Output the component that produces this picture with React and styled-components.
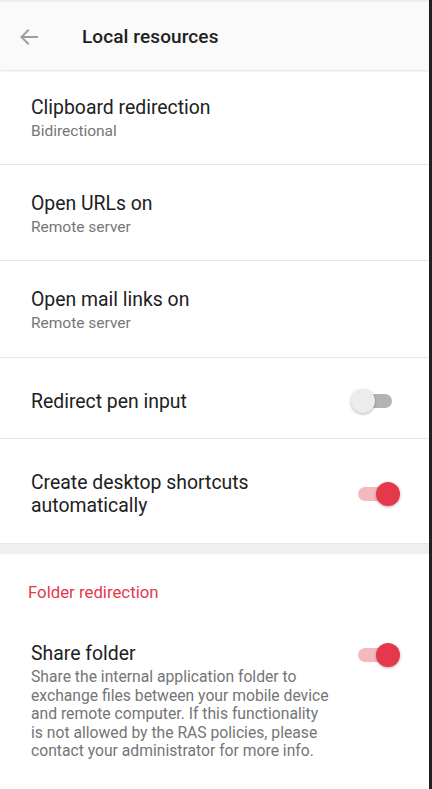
import React, { useState } from "react";
import styled, { createGlobalStyle } from "styled-components";

const GlobalStyle = createGlobalStyle`
  html, body {
    margin: 0;
    padding: 0;
    background: #ffffff;
    font-family: Roboto, "Noto Sans", Arial, sans-serif;
    -webkit-font-smoothing: antialiased;
  }
  * { box-sizing: border-box; }
`;

const RED = "#e5394b";

function Switch({ on, onToggle }) {
  return (
    <SwitchBox onClick={onToggle} role="switch" aria-checked={on}>
      <Track $on={on} />
      <Thumb $on={on} />
    </SwitchBox>
  );
}

function BackArrow() {
  return (
    <svg width="24" height="24" viewBox="0 0 24 24" fill="none">
      <path
        d="M20 12H4.5M11 5.5L4.5 12l6.5 6.5"
        stroke="#9e9e9e"
        strokeWidth="2"
        strokeLinecap="square"
      />
    </svg>
  );
}

export default function App() {
  const [pen, setPen] = useState(false);
  const [shortcuts, setShortcuts] = useState(true);
  const [share, setShare] = useState(true);

  return (
    <>
      <GlobalStyle />
      <Screen>
        <Main>
          <StatusStrip />
          <Header>
            <BackButton>
              <BackArrow />
            </BackButton>
            <HeaderTitle>Local resources</HeaderTitle>
          </Header>

          <Row $h={95}>
            <Texts>
              <Title>Clipboard redirection</Title>
              <Sub>Bidirectional</Sub>
            </Texts>
          </Row>
          <Row $h={96}>
            <Texts>
              <Title>Open URLs on</Title>
              <Sub>Remote server</Sub>
            </Texts>
          </Row>
          <Row $h={97}>
            <Texts>
              <Title>Open mail links on</Title>
              <Sub>Remote server</Sub>
            </Texts>
          </Row>
          <Row $h={81}>
            <Texts>
              <Title>Redirect pen input</Title>
            </Texts>
            <Switch on={pen} onToggle={() => setPen(!pen)} />
          </Row>
          <Row $h={104} $last>
            <Texts>
              <Title $narrow>Create desktop shortcuts automatically</Title>
            </Texts>
            <Switch on={shortcuts} onToggle={() => setShortcuts(!shortcuts)} />
          </Row>

          <SectionGap />

          <Section>
            <SectionLabel>Folder redirection</SectionLabel>
            <TopRow>
              <Texts>
                <Title>Share folder</Title>
                <Description>
                  Share the internal application folder to exchange files
                  between your mobile device and remote computer. If this
                  functionality is not allowed by the RAS policies, please
                  contact your administrator for more info.
                </Description>
              </Texts>
              <Switch on={share} onToggle={() => setShare(!share)} />
            </TopRow>
          </Section>
        </Main>
        <EdgeStrip />
      </Screen>
    </>
  );
}

const Screen = styled.div`
  display: flex;
  width: 432px;
  height: 789px;
  overflow: hidden;
`;

const Main = styled.div`
  flex: 1;
  display: flex;
  flex-direction: column;
  background: #ffffff;
`;

const EdgeStrip = styled.div`
  width: 3px;
  background: #1e2225;
`;

const StatusStrip = styled.div`
  height: 2px;
  background: #efefef;
`;

const Header = styled.header`
  height: 68px;
  display: flex;
  align-items: center;
  background: #fafafa;
  box-shadow: 0 1px 2px rgba(0, 0, 0, 0.12);
  position: relative;
  z-index: 1;
`;

const BackButton = styled.div`
  width: 82px;
  display: flex;
  align-items: center;
  padding-left: 17px;
  padding-top: 1px;
`;

const HeaderTitle = styled.h1`
  margin: 0;
  font-size: 19px;
  font-weight: 500;
  color: #212121;
  letter-spacing: 0.1px;
`;

const Row = styled.div`
  height: ${(p) => p.$h}px;
  display: flex;
  align-items: center;
  justify-content: space-between;
  padding: 6px 28px 0 31px;
  border-bottom: ${(p) => (p.$last ? "none" : "1px solid #e6e6e6")};
`;

const TopRow = styled.div`
  display: flex;
  align-items: flex-start;
  justify-content: space-between;
  padding: 0 28px 0 31px;
`;

const Texts = styled.div`
  display: flex;
  flex-direction: column;
`;

const Title = styled.div`
  font-size: 19.4px;
  line-height: 23px;
  color: #212121;
  max-width: ${(p) => (p.$narrow ? "260px" : "none")};
`;

const Sub = styled.div`
  font-size: 15.5px;
  line-height: 25px;
  color: #767676;
`;

const SectionGap = styled.div`
  height: 11px;
  background: #efefef;
  border-top: 1px solid #e6e6e6;
`;

const Section = styled.section`
  display: flex;
  flex-direction: column;
  padding-top: 28px;
`;

const SectionLabel = styled.div`
  font-size: 16.8px;
  line-height: 20px;
  color: ${RED};
  padding-left: 28px;
  margin-bottom: 40px;
`;

const Description = styled.div`
  width: 302px;
  margin-top: 3px;
  font-size: 15.7px;
  line-height: 18.5px;
  color: #757575;
`;

const SwitchBox = styled.div`
  position: relative;
  width: 50px;
  height: 26px;
  flex-shrink: 0;
  cursor: pointer;
`;

const Track = styled.div`
  position: absolute;
  left: 7px;
  top: 6px;
  width: 34px;
  height: 14px;
  border-radius: 7px;
  background: ${(p) => (p.$on ? "#f6b8bf" : "#b3b3b3")};
`;

const Thumb = styled.div`
  position: absolute;
  top: 1px;
  left: ${(p) => (p.$on ? "25px" : "0")};
  width: 24px;
  height: 24px;
  border-radius: 50%;
  background: ${(p) => (p.$on ? RED : "#ececec")};
  box-shadow: 0 1px 3px rgba(0, 0, 0, 0.3);
`;
